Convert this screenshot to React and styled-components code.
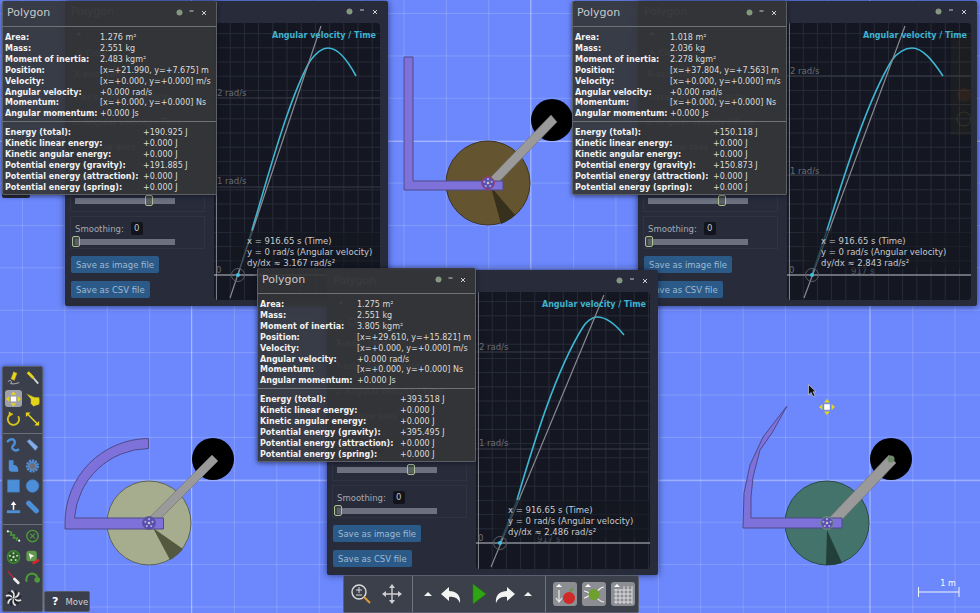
import React from 'react';
import styled, { createGlobalStyle } from 'styled-components';

const GlobalStyle = createGlobalStyle`
    html, body { margin: 0; padding: 0; background: #6c88fc; }
    body { font-family: "DejaVu Sans", "Liberation Sans", sans-serif; overflow: hidden; }
`;

const Desktop = styled.div`
    position: relative;
    width: 980px;
    height: 613px;
    overflow: hidden;
    background-color: #6c88fc;
    background-image:
        linear-gradient(to right, rgba(255,255,255,.36) 1px, transparent 1px),
        linear-gradient(to bottom, rgba(255,255,255,.36) 1px, transparent 1px),
        linear-gradient(to right, rgba(255,255,255,.16) 1px, transparent 1px),
        linear-gradient(to bottom, rgba(255,255,255,.16) 1px, transparent 1px);
    background-size: 339.2px 339.2px, 339.2px 339.2px, 42.4px 42.4px, 42.4px 42.4px;
    background-position: 191px 0, 0 141px, 22px 0, 0 13px;
`;

const SceneLayer = styled.svg`
    position: absolute;
    left: 0;
    top: 0;
`;

const GraphWin = styled.section`
    position: absolute;
    left: ${p => p.$x}px;
    top: ${p => p.$y}px;
    width: ${p => p.$w}px;
    height: 305px;
    box-sizing: border-box;
    display: grid;
    grid-template-columns: 149px 1fr;
    background: #282c3a;
    border-radius: 2px;
    box-shadow: 0 0 7px rgba(10,15,50,.65);
    color: #a4a8b2;
    font-size: 8.5px;
`;

const Controls = styled.div`
    display: flex;
    flex-direction: column;
    box-sizing: border-box;
    height: 305px;
    padding: 0 9px 8px 5px;
`;

const GhostTitle = styled.div`
    height: 22px;
    line-height: 21px;
    font-size: 11px;
    padding-left: 1px;
    color: #8a8e98;
`;

const GhostRow = styled.div`
    height: ${p => p.$h || 20}px;
    line-height: ${p => p.$h || 20}px;
    padding-left: ${p => p.$in || 4}px;
    white-space: nowrap;
    color: #8a8e98;
`;

const LowerGroup = styled.div`
    margin-top: auto;
    display: flex;
    flex-direction: column;
    gap: 4px;
`;

const Section = styled.div`
    height: ${p => p.$h}px;
    box-sizing: border-box;
    border: 1px solid #2f3342;
    padding: 5px 0 0 4px;
`;

const SliderHead = styled.div`
    display: flex;
    align-items: center;
    gap: 7px;
    height: 13px;
`;

const ValueBox = styled.span`
    width: 12px;
    height: 13px;
    line-height: 13px;
    text-align: center;
    background: #12141c;
    border-radius: 2px;
    color: #c0c3ca;
`;

const Track = styled.div`
    position: relative;
    width: 100px;
    height: 6px;
    margin-top: ${p => p.$top || 4}px;
    background: #6c7180;
`;

const Handle = styled.div`
    position: absolute;
    left: ${p => p.$at}px;
    top: -3px;
    width: 6px;
    height: 9px;
    border: 1px solid #a9c193;
    border-radius: 2px;
    background: rgba(80,85,80,.6);
`;

const SaveGroup = styled.div`
    display: flex;
    flex-direction: column;
    align-items: flex-start;
    gap: 8px;
    margin: 3px 0 0 1px;
`;

const SaveButton = styled.button`
    height: 17px;
    padding: 0 5px;
    border: 0;
    border-radius: 2px;
    background: #2c5a88;
    color: #9fbad2;
    font: 8.5px "DejaVu Sans", sans-serif;
`;

const GraphSide = styled.div`
    display: flex;
    flex-direction: column;
    min-width: 0;
`;

const WinButtons = styled.div`
    height: ${p => p.$h}px;
    display: flex;
    align-items: center;
    justify-content: flex-end;
    padding-right: ${p => p.$pad}px;
`;

const GraphPanel = styled.div`
    width: ${p => p.$w}px;
    height: 277px;
    margin-top: 1px;
    background: #141721;
    border-radius: 4px;
    overflow: hidden;
    font-family: "DejaVu Sans", sans-serif;
`;

const InfoWin = styled.section`
    position: absolute;
    left: ${p => p.$x}px;
    top: ${p => p.$y}px;
    width: ${p => p.$w}px;
    height: 194px;
    box-sizing: border-box;
    background: rgba(52,53,55,.92);
    border: 1px solid #5c5f63;
    border-top: 0;
    border-radius: 2px;
    box-shadow: 0 1px 5px rgba(10,10,30,.6);
`;

const InfoHead = styled.header`
    height: 26px;
    box-sizing: border-box;
    padding: 0 0 3px 4px;
    display: flex;
    align-items: center;
    justify-content: space-between;
    font-size: 11px;
    color: #c9c9c9;
    border-bottom: 1px solid #6f7174;
`;

const InfoBody = styled.div`
    padding: ${p => p.$top}px 0 ${p => p.$bottom}px 2px;
    border-bottom: ${p => (p.$line ? '1px solid #6f7174' : '0')};
`;

const InfoRow = styled.div`
    display: grid;
    grid-template-columns: ${p => p.$col}px 1fr;
    height: 10.92px;
    line-height: 10.92px;
    font-size: 8px;
    white-space: nowrap;
    color: #dcdcdc;
`;

const InfoLabel = styled.span`
    font-weight: 700;
    color: #f2f2f2;
`;

const ToolBox = styled.aside`
    position: absolute;
    left: 2px;
    top: 366px;
    width: 41px;
    height: 246px;
    box-sizing: border-box;
    display: flex;
    flex-direction: column;
    background: #3b3f4b;
    border: 1px solid #565b6a;
    border-radius: 2px;
    box-shadow: 0 0 4px rgba(20,30,80,.5);
`;

const ToolGroup = styled.div`
    height: ${p => p.$h}px;
    box-sizing: border-box;
    display: grid;
    grid-template-columns: 19px 19px;
    grid-auto-rows: 20.5px;
    justify-content: center;
    align-items: center;
    justify-items: center;
    padding-top: 1px;
    border-bottom: ${p => (p.$line ? '1px solid #6a6f7c' : '0')};
`;

const ToolCell = styled.div`
    width: 17px;
    height: 17px;
    display: flex;
    align-items: center;
    justify-content: center;
    border-radius: 3px;
    background: ${p => (p.$on ? '#9ea1a8' : 'transparent')};
`;

const HelpTip = styled.div`
    position: absolute;
    left: 44px;
    top: 591px;
    width: 46px;
    height: 21px;
    box-sizing: border-box;
    display: flex;
    align-items: center;
    gap: 7px;
    padding-left: 7px;
    background: #3b3f4b;
    border: 1px solid #565b6a;
    border-radius: 2px;
    color: #d0d2d6;
    font-size: 8.5px;
`;

const HelpMark = styled.b`
    font-size: 11px;
    color: #fff;
`;

const BehindBox = styled.div`
    position: absolute;
    left: 2px;
    top: 190px;
    width: 28px;
    height: 8px;
    background: #262933;
    border-radius: 2px;
`;

const Dock = styled.nav`
    position: absolute;
    left: 343px;
    top: 575px;
    width: 296px;
    height: 38px;
    box-sizing: border-box;
    display: flex;
    background: #3c404b;
    border: 1px solid #5b6070;
    border-radius: 2px;
`;

const DockGroup = styled.div`
    width: ${p => p.$w}px;
    box-sizing: border-box;
    display: flex;
    align-items: center;
    justify-content: center;
    gap: ${p => p.$gap}px;
    padding: 0 ${p => p.$right || 0}px 0 ${p => p.$left || 0}px;
    border-right: ${p => (p.$line ? '1px solid #70747f' : '0')};
`;

const DockToggle = styled.div`
    width: 24px;
    height: 24px;
    border-radius: 3px;
    background: #8c8e93;
`;

const Icon = ({ size = 18, view = 18, children }) => (
    <svg width={size} height={size} viewBox={`0 0 ${view} ${view}`}>{children}</svg>
);

const WinIcons = ({ gap }) => (
    <svg width={gap * 2 + 8} height="9" viewBox={`0 0 ${gap * 2 + 8} 9`}>
        <circle cx="3.5" cy="4.5" r="2.6" fill="#7e9a72" stroke="#9a9da2" strokeWidth=".8" />
        <path d={`M${gap + 1.5} 3h4`} stroke="#c8c8c8" strokeWidth="1" />
        <path d={`M${gap * 2 + 2} 3l4 4M${gap * 2 + 6} 3l-4 4`} stroke="#d0d0d0" strokeWidth="1" />
    </svg>
);

const yellow = '#e4d41c';
const blue = '#4d8ed8';
const green = '#4c9a38';

const MoveGlyph = () => (
    <g>
        <rect x="6" y="6" width="6" height="6" fill="#fff" stroke="#888" strokeWidth=".4" />
        <path d="M9 1l3 3.4H6zM9 17l3-3.4H6zM1 9l3.4-3v6zM17 9l-3.4-3v6z" fill={yellow} />
    </g>
);

const toolGroups = [
    { h: 67, line: true, items: [
        <><path d="M9 2l4 2-3 8-4-2z" fill={yellow} stroke="#554" strokeWidth=".5" /><path d="M3 13c3-3 5 0 3 2 4 1 7-1 9-1" fill="none" stroke="#bbb" strokeWidth="1" /></>,
        <><path d="M4 3l6 6" stroke={yellow} strokeWidth="3" /><path d="M10 9l5 6" stroke="#d4d4d4" strokeWidth="2" /></>,
        <MoveGlyph />,
        <path d="M2 3l9 4h5c1 3 1 6 0 8l-6 2-3-3V9z" fill={yellow} stroke="#443" strokeWidth=".6" />,
        <><path d="M6 4a6 6 0 1 0 8 2" fill="none" stroke="#d3c31a" strokeWidth="2" /><path d="M4 1l5 3-5 3z" fill="#d3c31a" /></>,
        <><path d="M4 4l10 10" stroke={yellow} strokeWidth="1.6" /><path d="M2 2h5L2 7zM16 16h-5l5-5z" fill={yellow} /></>,
    ] },
    { h: 91, line: true, items: [
        <path d="M3 5c3-4 9-2 7 3-2 3-4 3-1 6 1 1 3 1 5 0" fill="none" stroke={blue} strokeWidth="2.6" strokeLinecap="round" />,
        <path d="M3 5l3-2 9 8-3 4z" fill="#86aee6" stroke="#3e6cb0" strokeWidth=".6" />,
        <path d="M4 3h5v5c3 0 5 2 5 5v2H7c-2 0-3-1-3-3z" fill={blue} />,
        <circle cx="9" cy="9" r="5" fill="#fff" fillOpacity=".25" stroke={blue} strokeWidth="4" strokeDasharray="2 .8" />,
        <rect x="2.5" y="2.5" width="13" height="13" fill={blue} stroke="#3a70b4" strokeWidth=".6" />,
        <circle cx="9" cy="9" r="6.8" fill={blue} stroke="#3a70b4" strokeWidth=".6" />,
        <><path d="M2 14h14" stroke={blue} strokeWidth="3" /><path d="M9 12V6" stroke="#fff" strokeWidth="1.6" /><path d="M6 7l3-4 3 4z" fill="#fff" /></>,
        <path d="M5 5l8 8" stroke={blue} strokeWidth="5.5" strokeLinecap="round" />,
    ] },
    { h: 86, items: [
        <><path d="M3 4l4 1-1 3 4 0-1 3 4 0-1 3" fill="none" stroke={green} strokeWidth="1.6" /><circle cx="3" cy="4" r="1.2" fill="#eee" /><circle cx="15" cy="14" r="1.2" fill="#eee" /></>,
        <><circle cx="9" cy="9" r="6" fill="none" stroke={green} strokeWidth="1.5" /><path d="M6.5 6.5l5 5M11.5 6.5l-5 5" stroke={green} strokeWidth="1.2" /></>,
        <>
            <circle cx="9" cy="9" r="6.5" fill="#2a5e26" stroke="#3f8434" strokeWidth="1.6" />
            {[0, 72, 144, 216, 288].map(a => (
                <circle key={a} cx={9 + 4 * Math.sin(a * Math.PI / 180)} cy={9 - 4 * Math.cos(a * Math.PI / 180)} r="1.1" fill="#c8d8c0" />
            ))}
            <circle cx="9" cy="9" r="1.2" fill="#ddd" />
        </>,
        <><rect x="2.5" y="2.5" width="11" height="11" rx="3" fill="#5f9a4c" /><path d="M5 5l6 3-3 1-1 3z" fill="#fff" /><path d="M9 16l7-4" stroke="#d8252a" strokeWidth="2.6" /></>,
        <><path d="M3 3l7 8" stroke="#d6262c" strokeWidth="1.2" /><path d="M10 11l4 4" stroke="#eee" strokeWidth="3" strokeLinecap="round" /></>,
        <><path d="M3 14a6 6 0 0 1 11-5" fill="none" stroke={green} strokeWidth="2.2" /><circle cx="14" cy="12" r="3" fill={green} /></>,
        <g fill="none" strokeWidth="1.8">
            {[0, 30, 60, 90, 120, 150, 180, 210, 240, 270, 300, 330].map((r, i) => (
                <path key={r} d="M9 9c2-2 4-4 2-8" stroke={i % 2 ? '#e8e8e8' : '#20232a'} transform={`rotate(${r} 9 9)`} />
            ))}
        </g>,
    ] },
];

const Caret = () => <Icon size={10} view={10}><path d="M1 7l4-4 4 4z" fill="#f2f2f2" /></Icon>;

const undoPath = 'M10 4L2 11l8 7v-4c5-1 9 1 11 6 1-8-4-12-11-12z';

const info = [
    {
        x: 2, y: 1, w: 215, col: 95, col2: 138,
        first: ['1.276 m²', '2.551 kg', '2.483 kgm²', '[x=+21.990, y=+7.675] m'],
        total: '+190.925 J', gravity: '+191.885 J',
    },
    {
        x: 572, y: 1, w: 215, col: 95, col2: 138,
        first: ['1.018 m²', '2.036 kg', '2.278 kgm²', '[x=+37.804, y=+7.563] m'],
        total: '+150.118 J', gravity: '+150.873 J',
    },
    {
        x: 257, y: 268, w: 219, col: 97, col2: 140,
        first: ['1.275 m²', '2.551 kg', '3.805 kgm²', '[x=+29.610, y=+15.821] m'],
        total: '+393.518 J', gravity: '+395.495 J',
    },
];

const graphs = [
    {
        x: 65, y: 1, w: 323, panel: 166, slope: '3.167', rad: [75, 164], radText: [73, 161],
        curve: 'M38 207C55 150,75 75,96 38C102 30,108 25,114 25C125 25,134 38,142 53',
        tangent: 'M16 275L107 3', dot: [24, 252], read: 33, ticks: null,
    },
    {
        x: 638, y: 1, w: 339, panel: 184, slope: '2.843', rad: [53, 152], radText: [51, 151],
        curve: 'M40 207C58 150,80 78,105 37C110 30,118 25,125 25C136 25,146 38,156 53',
        tangent: 'M17 275L118 3', dot: [25, 252], read: 34, ticks: 64, ghost: true,
    },
    {
        x: 327, y: 270, w: 331, panel: 174, slope: '2.486', rad: [60, 157], radText: [58, 154],
        curve: 'M41 208C58 150,80 78,107 35C110 30,116 25,121 25C131 25,140 33,148 43',
        tangent: 'M15 275L128 3', dot: [24, 251], read: 32, ticks: 61,
    },
];

const Chart = ({ g }) => {
    const w = g.panel;
    const xs = Array.from({ length: Math.floor(w / 14.2) + 1 }, (_, i) => 2 + i * 14.2);
    const ys = Array.from({ length: 20 }, (_, i) => (g.dot[1] - i * 14.2));
    const start = g.curve.slice(1).split('C')[0];
    return (
        <svg width={w} height="277" viewBox={`0 0 ${w} 277`}>
            <g stroke="#282c39" strokeWidth="1">
                {xs.map(x => <path key={x} d={`M${x} 0V277`} />)}
                {ys.map(y => <path key={y} d={`M0 ${y}H${w}`} />)}
            </g>
            {g.ghost && (
                <g>
                    <rect x={w - 20} y="12" width="20" height="100" fill="#5a4a1c" opacity=".12" />
                    <circle cx={w - 7} cy="72" r="7" fill="#7a4020" opacity=".18" />
                    <circle cx={w - 7} cy="96" r="7" fill="none" stroke="#4d5a35" opacity=".4" />
                </g>
            )}
            {g.rad.map(y => <path key={y} d={`M0 ${y}H${w}`} stroke="#3a3e49" strokeWidth="1" />)}
            <path d="M2.5 0V277" stroke="#7a7d85" strokeWidth="1" />
            <path d={`M0 ${g.dot[1]}H${w}`} stroke="#b9bcc2" strokeWidth="1" />
            <g fontSize="8.5" fill="#6b6e76">
                <text x="3" y={g.radText[0]}>2 rad/s</text>
                <text x="3" y={g.radText[1]}>1 rad/s</text>
                <text x="2" y={g.dot[1] - 2}>0</text>
                {g.ticks && <text x={g.ticks} y={g.dot[1] - 1} fill="#4d5058">917 s</text>}
            </g>
            <path d={`M${g.dot[0]} ${g.dot[1]}L${start}`} stroke="#2f7f95" strokeWidth="1.5" fill="none" />
            <path d={g.curve} stroke="#3cb6d2" strokeWidth="1.6" fill="none" />
            <path d={g.tangent} stroke="#888b93" strokeWidth="1.2" />
            <rect x="18" y="208" width={w - 18} height="38" fill="#141721" opacity=".55" />
            <g fontSize="8.5" fill="#c6c9cf">
                <text x={g.read} y="221">x = 916.65 s (Time)</text>
                <text x={g.read} y="232">y = 0 rad/s (Angular velocity)</text>
                <text x={g.read} y="243">dy/dx ≈ {g.slope} rad/s²</text>
            </g>
            <circle cx={g.dot[0]} cy={g.dot[1]} r="6.5" fill="none" stroke="#5c5f68" strokeWidth="1" />
            <circle cx={g.dot[0]} cy={g.dot[1]} r="2" fill="#3cc0dc" />
            <text x={w - 4} y="14.500" textAnchor="end" fontSize="8" fontWeight="700" fill="#3fb3cf">Angular velocity / Time</text>
        </svg>
    );
};

const GraphWindow = ({ g }) => (
    <GraphWin $x={g.x} $y={g.y} $w={g.w}>
        <Controls>
            <GhostTitle>Polygon</GhostTitle>
            <GhostRow $h={20} $in={6}>◂</GhostRow>
            <GhostRow $h={20} $in={6}>✎ Clear</GhostRow>
            <GhostRow $h={22}>X-axis: Time</GhostRow>
            <GhostRow $h={24}>Y-axis: Angular velocity</GhostRow>
            <GhostRow $h={26} $in={3}>☑ Angular velocity / Time</GhostRow>
            <GhostRow $h={24} $in={20}>Show axes</GhostRow>
            <LowerGroup>
                <Section $h={48}>
                    <SliderHead>Scale:<ValueBox>30</ValueBox></SliderHead>
                    <Track $top={15}><Handle $at={70} /></Track>
                </Section>
                <Section $h={33}>
                    <SliderHead>Smoothing:<ValueBox>0</ValueBox></SliderHead>
                    <Track><Handle $at={-3} /></Track>
                </Section>
                <SaveGroup>
                    <SaveButton>Save as image file</SaveButton>
                    <SaveButton>Save as CSV file</SaveButton>
                </SaveGroup>
            </LowerGroup>
        </Controls>
        <GraphSide>
            <WinButtons $h={21} $pad={9}><WinIcons gap={12.5} /></WinButtons>
            <GraphPanel $w={g.panel}><Chart g={g} /></GraphPanel>
        </GraphSide>
    </GraphWin>
);

const InfoWindow = ({ d }) => (
    <InfoWin $x={d.x} $y={d.y} $w={d.w}>
        <InfoHead>
            Polygon
            <WinButtons $h={23} $pad={8}><WinIcons gap={12} /></WinButtons>
        </InfoHead>
        <InfoBody $top={6} $bottom={1} $line>
            {[
                ['Area:', d.first[0]],
                ['Mass:', d.first[1]],
                ['Moment of inertia:', d.first[2]],
                ['Position:', d.first[3]],
                ['Velocity:', '[x=+0.000, y=+0.000] m/s'],
                ['Angular velocity:', '+0.000 rad/s'],
                ['Momentum:', '[x=+0.000, y=+0.000] Ns'],
                ['Angular momentum:', '+0.000 Js'],
            ].map(([k, v]) => (
                <InfoRow key={k} $col={d.col}><InfoLabel>{k}</InfoLabel><span>{v}</span></InfoRow>
            ))}
        </InfoBody>
        <InfoBody $top={6} $bottom={0}>
            {[
                ['Energy (total):', d.total],
                ['Kinetic linear energy:', '+0.000 J'],
                ['Kinetic angular energy:', '+0.000 J'],
                ['Potential energy (gravity):', d.gravity],
                ['Potential energy (attraction):', '+0.000 J'],
                ['Potential energy (spring):', '+0.000 J'],
            ].map(([k, v]) => (
                <InfoRow key={k} $col={d.col2}><InfoLabel>{k}</InfoLabel><span>{v}</span></InfoRow>
            ))}
        </InfoBody>
    </InfoWin>
);

const Joint = ({ x, y, ring }) => (
    <g>
        <circle cx={x} cy={y} r="6.3" fill="#5a4fb0" stroke={ring} strokeWidth="1" />
        {[0, 72, 144, 216, 288].map(a => (
            <circle key={a} cx={x + 3.8 * Math.sin(a * Math.PI / 180)} cy={y - 3.8 * Math.cos(a * Math.PI / 180)} r="1.1" fill="#a9a6dc" />
        ))}
        <circle cx={x} cy={y} r="1.3" fill="#c9c7b4" />
    </g>
);

const shapeStyle = { fill: '#7f71da', stroke: '#4e4a8c', strokeWidth: 1 };
const armStyle = { fill: '#9a9a9a', stroke: '#6d6d70', strokeWidth: .6 };

const Scene = () => (
    <SceneLayer width="980" height="613" viewBox="0 0 980 613">
        {/* top contraption */}
        <circle cx="552" cy="120" r="21" fill="#000" />
        <circle cx="488" cy="183" r="42" fill="#645530" stroke="#3e3520" />
        <path d="M491 187L515 215A42 42 0 0 1 501 224Z" fill="#37301c" />
        <path d="M490 178L551 115L557 122L496 185Z" {...armStyle} />
        <path d="M404 57H413V181H503V190H404Z" {...shapeStyle} />
        <Joint x={488} y={183} ring="#a03a58" />

        {/* left contraption */}
        <circle cx="213" cy="459" r="21" fill="#000" />
        <circle cx="149" cy="523" r="42" fill="#a6ad8e" stroke="#5e6454" />
        <path d="M153 528L183 549A42 42 0 0 1 170 560Z" fill="#53583f" />
        <path d="M149 518L212 455L218 461L155 524Z" {...armStyle} />
        <path d="M65 529V523A84 84 0 0 1 148.500 438.500V448.500A75 75 0 0 0 74.500 518H163.500V529Z" {...shapeStyle} />
        <Joint x={149} y={523} ring="#54508c" />

        {/* right contraption */}
        <circle cx="891" cy="459" r="21" fill="#000" />
        <circle cx="827" cy="523" r="42" fill="#44736c" stroke="#2a4a46" />
        <path d="M827 530L842 563A42 42 0 0 1 826 565Z" fill="#233f3a" />
        <path d="M829 518L889 455L896 463L836 526Z" {...armStyle} />
        <circle cx="891" cy="459" r="3.500" fill="#6d8a68" />
        <path d="M743 528L744 493L750 465L763 437L787 406L772 433L760 450L753 477L751 497L751 518H842V528Z" {...shapeStyle} />
        <Joint x={827} y={523} ring="#6d9a68" />

        {/* mouse and its move handle */}
        <path d="M808.500 384.500V395L811 392.500L813 396.500L815 395.500L813 391.800H816Z" fill="#111" stroke="#ddd" strokeWidth=".6" />
        <svg x="818" y="398" width="18" height="18" viewBox="0 0 18 18"><MoveGlyph /></svg>

        {/* scale bar */}
        <path d="M918.500 587V597M959 587V597M918.500 592H959" stroke="#f2f4ff" strokeWidth="1" fill="none" />
        <text x="948" y="586" textAnchor="middle" fontSize="8" fill="#fff" fontFamily="DejaVu Sans, sans-serif">1 m</text>
    </SceneLayer>
);

const App = () => (
    <Desktop>
        <GlobalStyle />
        <Scene />
        <BehindBox />
        <GraphWindow g={graphs[0]} />
        <GraphWindow g={graphs[1]} />
        <InfoWindow d={info[0]} />
        <InfoWindow d={info[1]} />
        <GraphWindow g={graphs[2]} />
        <InfoWindow d={info[2]} />
        <ToolBox>
            {toolGroups.map(group => (
                <ToolGroup key={group.h} $h={group.h} $line={group.line}>
                    {group.items.map((item, i) => (
                        <ToolCell key={i} $on={group.h === 67 && i === 2}><Icon>{item}</Icon></ToolCell>
                    ))}
                </ToolGroup>
            ))}
        </ToolBox>
        <HelpTip><HelpMark>?</HelpMark>Move</HelpTip>
        <Dock>
            <DockGroup $w={69} $gap={10} $right={3} $line>
                <Icon size={22} view={22}>
                    <circle cx="9" cy="9" r="7" fill="none" stroke="#dcdcdc" strokeWidth="1.4" />
                    <path d="M6 7h6M9 4v6M6 12h6" stroke="#dcdcdc" strokeWidth="1" />
                    <path d="M14 14l6 6" stroke="#e09a30" strokeWidth="2" />
                </Icon>
                <Icon size={20} view={20}>
                    <path d="M10 4v12M4 10h12" stroke="#cfd0d2" strokeWidth="1.4" />
                    <path d="M10 0l3 4H7zM10 20l3-4H7zM0 10l4-3v6zM20 10l-4-3v6z" fill="#cfd0d2" />
                </Icon>
            </DockGroup>
            <DockGroup $w={134} $gap={6} $right={2} $line>
                <Caret />
                <Icon size={22} view={22}><path d={undoPath} fill="#f4f4f4" /></Icon>
                <Icon size={22} view={22}><path d="M6 1l13 10L6 21z" fill="#2fa514" stroke="#1f7a0c" strokeWidth=".6" /></Icon>
                <Icon size={22} view={22}><path d={undoPath} fill="#f4f4f4" transform="matrix(-1 0 0 1 22 0)" /></Icon>
                <Caret />
            </DockGroup>
            <DockGroup $w={93} $gap={5} $left={4}>
                <DockToggle>
                    <Icon size={24} view={24}>
                        <path d="M3 5l3-3 3 3z" fill="#fff" />
                        <path d="M6 8v11M3 16l3 4 3-4" stroke="#e8e8e8" strokeWidth="1.2" fill="none" />
                        <circle cx="16" cy="16" r="6" fill="#cf2a28" />
                        <path d="M16 10c1-3 3-4 5-4-1 2-3 4-5 4z" fill="#5d9a34" />
                    </Icon>
                </DockToggle>
                <DockToggle>
                    <Icon size={24} view={24}>
                        <path d="M3 5l3-3 3 3z" fill="#fff" />
                        <path d="M2 9c4 0 5 3 8 3M2 16c4 0 5-4 8-4M22 5c-4 0-5 4-8 4M22 20c-4 0-5-3-8-4" stroke="#f0f0f0" strokeWidth="1.2" fill="none" />
                        <circle cx="12" cy="12.500" r="5.500" fill="#6da02c" />
                    </Icon>
                </DockToggle>
                <DockToggle>
                    <Icon size={24} view={24}>
                        <path d="M3 5l3-3 3 3z" fill="#fff" />
                        <path d="M3 8h18M3 12h18M3 16h18M3 20h18M5 7v15M9 7v15M13 4v18M17 4v18M21 4v18" stroke="#f0f0f0" strokeWidth=".8" fill="none" />
                    </Icon>
                </DockToggle>
            </DockGroup>
        </Dock>
    </Desktop>
);

export default App;
